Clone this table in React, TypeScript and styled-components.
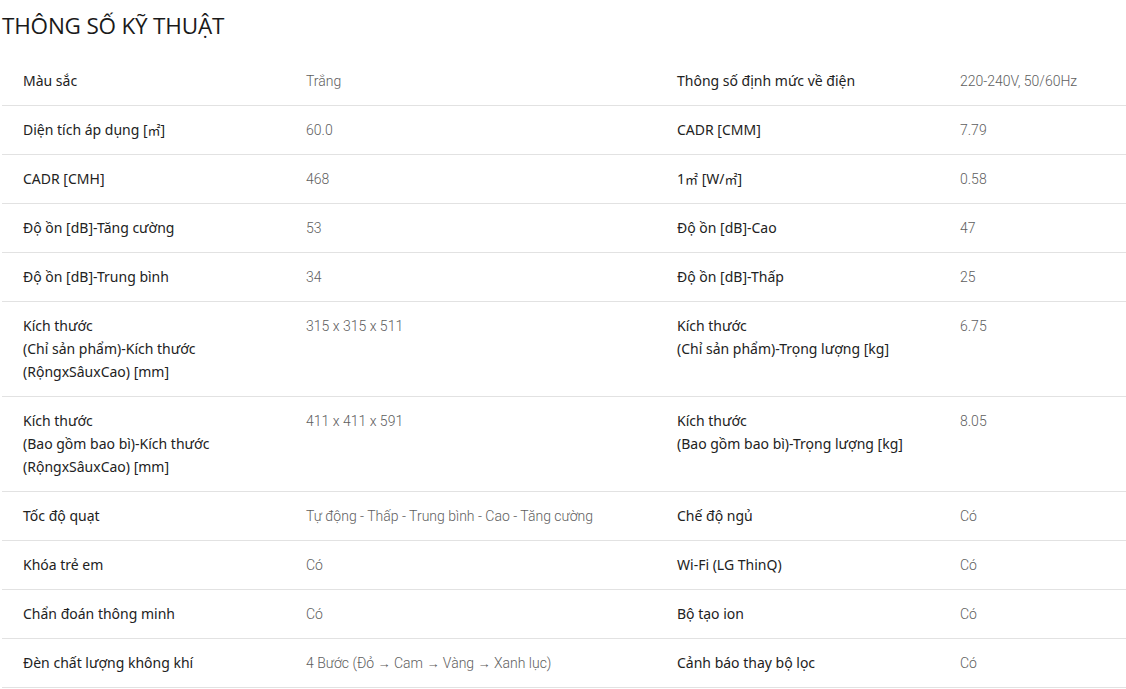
import React from 'react';
import styled, { createGlobalStyle } from 'styled-components';

const GlobalStyle = createGlobalStyle`
  html, body {
    margin: 0;
    padding: 0;
    background: #fff;
  }
  body {
    font-family: "Noto Sans", "Open Sans", Arial, sans-serif;
  }
`;

const Page = styled.div`
  padding: 12px 0 0 2px;
  width: 1124px;
`;

const Title = styled.h2`
  margin: 0 0 17px 0;
  font-family: "Open Sans", "Noto Sans", sans-serif;
  font-size: 22.5px;
  line-height: 28px;
  font-weight: 400;
  color: #1a1a1a;
  letter-spacing: -0.2px;
`;

const SpecTable = styled.div`
  display: grid;
  grid-template-columns: 283px 371px 283px 1fr;
`;

const Row = styled.div`
  display: contents;
`;

const Unit = styled.span`
  font-family: "Noto Sans CJK KR", "Noto Sans", sans-serif;
  font-size: 13px;
`;

const Arrow = styled.span`
  font-family: "Noto Sans", sans-serif;
  font-size: 13px;
`;

const Cell = styled.div<{ $value?: boolean }>`
  padding: ${p => (p.$value ? '13px 10px 12px 21px' : '12px 10px 13px 21px')};
  border-bottom: 1px solid #e2e2e2;
  font-size: 14px;
  line-height: 23px;
  color: ${p => (p.$value ? '#5e5e5e' : '#222')};
  font-family: ${p =>
    p.$value ? '"Roboto", "Noto Sans", sans-serif' : '"Noto Sans", "Open Sans", sans-serif'};
  font-weight: ${p => (p.$value ? 300 : 400)};
  white-space: pre-line;
`;

type Spec = [React.ReactNode, React.ReactNode, React.ReactNode, string];

const sqm = <Unit>㎡</Unit>;
const arrow = <Arrow>→</Arrow>;

const specs: Spec[] = [
  ['Màu sắc', 'Trắng', 'Thông số định mức về điện', '220-240V, 50/60Hz'],
  [<>Diện tích áp dụng [{sqm}]</>, '60.0', 'CADR [CMM]', '7.79'],
  ['CADR [CMH]', '468', <>1{sqm} [W/{sqm}]</>, '0.58'],
  ['Độ ồn [dB]-Tăng cường', '53', 'Độ ồn [dB]-Cao', '47'],
  ['Độ ồn [dB]-Trung bình', '34', 'Độ ồn [dB]-Thấp', '25'],
  [
    'Kích thước\n(Chỉ sản phẩm)-Kích thước\n(RộngxSâuxCao) [mm]',
    '315 x 315 x 511',
    'Kích thước\n(Chỉ sản phẩm)-Trọng lượng [kg]',
    '6.75',
  ],
  [
    'Kích thước\n(Bao gồm bao bì)-Kích thước\n(RộngxSâuxCao) [mm]',
    '411 x 411 x 591',
    'Kích thước\n(Bao gồm bao bì)-Trọng lượng [kg]',
    '8.05',
  ],
  ['Tốc độ quạt', 'Tự động - Thấp - Trung bình - Cao - Tăng cường', 'Chế độ ngủ', 'Có'],
  ['Khóa trẻ em', 'Có', 'Wi-Fi (LG ThinQ)', 'Có'],
  ['Chẩn đoán thông minh', 'Có', 'Bộ tạo ion', 'Có'],
  [
    'Đèn chất lượng không khí',
    <>4 Bước (Đỏ {arrow} Cam {arrow} Vàng {arrow} Xanh lục)</>,
    'Cảnh báo thay bộ lọc',
    'Có',
  ],
];

export default function App() {
  return (
    <Page>
      <GlobalStyle />
      <Title>THÔNG SỐ KỸ THUẬT</Title>
      <SpecTable>
        {specs.map((s, i) => (
          <Row key={i}>
            <Cell>{s[0]}</Cell>
            <Cell $value>{s[1]}</Cell>
            <Cell>{s[2]}</Cell>
            <Cell $value>{s[3]}</Cell>
          </Row>
        ))}
      </SpecTable>
    </Page>
  );
}
